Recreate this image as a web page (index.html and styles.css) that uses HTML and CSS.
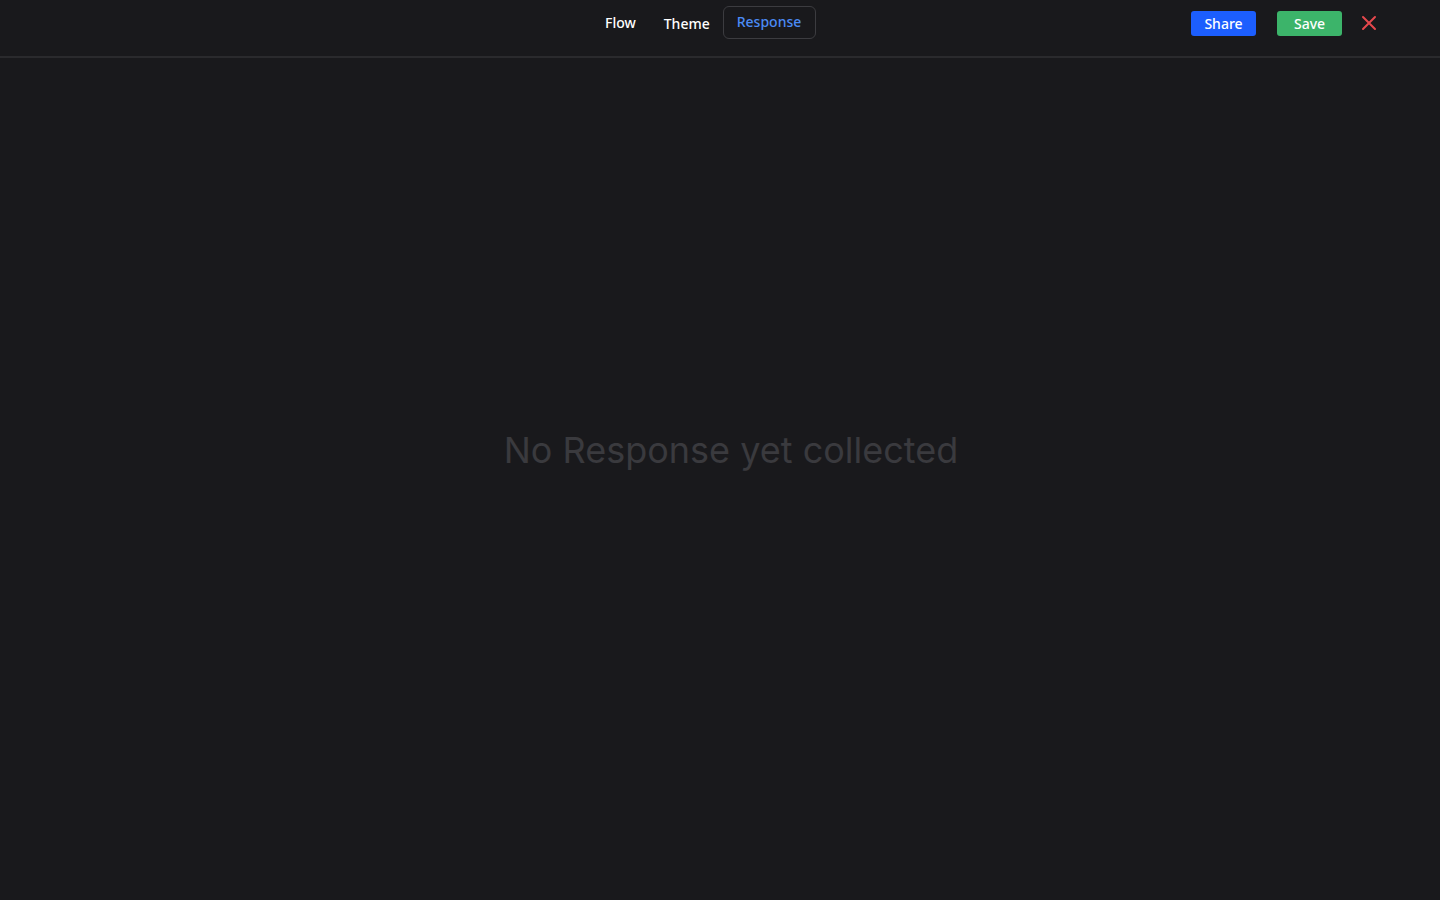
FILE: index.html
```html
<!DOCTYPE html>
<html lang="en">
<head>
<meta charset="utf-8">
<title>Response</title>
<link rel="stylesheet" href="styles.css">
</head>
<body>
<header class="topbar">
  <nav class="tabs">
    <a class="tab">Flow</a>
    <a class="tab tab-theme">Theme</a>
    <a class="tab tab-active">Response</a>
  </nav>
  <div class="actions">
    <button class="btn btn-share">Share</button>
    <button class="btn btn-save">Save</button>
    <button class="close" aria-label="Close">
      <svg width="16" height="16" viewBox="0 0 16 16"><path d="M2 2 L14 14 M14 2 L2 14" stroke="#e5484d" stroke-width="2" stroke-linecap="round"/></svg>
    </button>
  </div>
</header>
<main class="content">
  <p class="empty">No Response yet collected</p>
</main>
</body>
</html>
```
FILE: styles.css
```css
* { box-sizing: border-box; }
html, body { margin: 0; padding: 0; }
body {
  background: #19191c;
  height: 900px;
  overflow: hidden;
  font-family: "Noto Sans", "Open Sans", sans-serif;
  display: flex;
  flex-direction: column;
}
.topbar {
  height: 58px;
  border-bottom: 2px solid #2a2a2d;
  display: flex;
  align-items: flex-start;
  padding-left: 591px;
  padding-right: 63px;
}
.tabs {
  display: flex;
  align-items: flex-start;
  margin-top: 6px;
}
.tab {
  display: block;
  color: #ffffff;
  font-size: 14px;
  font-weight: 500;
  padding: 0 14px;
  height: 32px;
  line-height: 33px;
  cursor: pointer;
}
.tab-theme { line-height: 35px; padding-right: 13px; }
.tab-active {
  color: #4b8bf5;
  border: 1px solid #3c3c40;
  border-radius: 6px;
  padding: 0 14px 0 13px;
  height: 33px;
  line-height: 29px;
}
.actions {
  margin-left: auto;
  display: flex;
  align-items: center;
  margin-top: 11px;
}
.btn {
  border: none;
  border-radius: 3px;
  color: #ffffff;
  font-family: "Noto Sans", "Open Sans", sans-serif;
  font-size: 14px;
  font-weight: 500;
  height: 25px;
  width: 65px;
  padding: 0;
  line-height: 25px;
}
.btn-share { background: #1c5efe; }
.btn-save { background: #3cb46a; margin-left: 21px; }
.close {
  background: none;
  border: none;
  padding: 0;
  margin-left: 19px;
  width: 16px;
  height: 16px;
  display: flex;
  margin-top: -2px;
}
.content {
  flex: 1;
  display: flex;
  justify-content: center;
  padding-top: 368px;
  padding-left: 22px;
}
.empty {
  margin: 0;
  font-family: "Inter", sans-serif;
  font-size: 36px;
  font-weight: 400;
  color: #3a3a3e;
  line-height: 48px;
  height: 48px;
}
```
